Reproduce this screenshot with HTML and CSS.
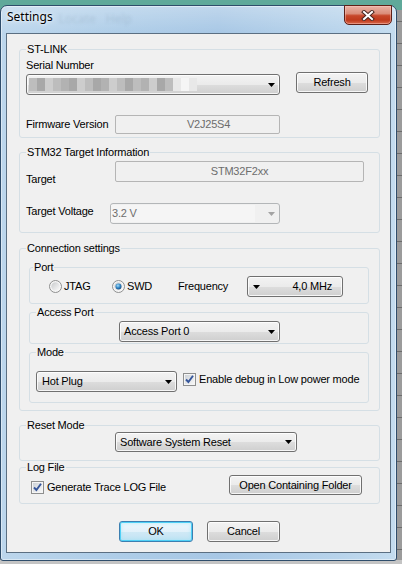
FILE: index.html
```html
<!DOCTYPE html>
<html lang="en">
<head>
<meta charset="utf-8">
<title>Settings</title>
<link rel="stylesheet" href="styles.css">
</head>
<body>
<div class="screen">
  <div class="window">
    <div class="titlebar">
      <span class="title">Settings</span>
      <span class="ghost ghost-1">Locate</span>
      <span class="ghost ghost-2">Help</span>
      <div class="close">
        <svg width="14" height="11" viewBox="0 0 14 11"><path d="M3 2L11 9M11 2L3 9" stroke="#4a2620" stroke-width="4" stroke-linecap="square" fill="none"/><path d="M3 2L11 9M11 2L3 9" stroke="#ffffff" stroke-width="2" stroke-linecap="square" fill="none"/></svg>
      </div>
    </div>
    <div class="client">
      <section class="group g-stlink">
        <span class="legend">ST-LINK</span>
        <div class="lbl">Serial Number</div>
        <div class="row serial-row">
          <div class="combo serial-combo">
            <div class="mosaic">
              <span class="m-b"></span><span class="m-a"></span><span class="m-c"></span><span class="m-b"></span><span class="m-d"></span><span class="m-a"></span><span class="m-c"></span><span class="m-b"></span><span class="m-a"></span><span class="m-d"></span><span class="m-c"></span><span class="m-b"></span><span class="m-a"></span><span class="m-b"></span><span class="m-d"></span><span class="m-c"></span><span class="m-a"></span><span class="m-b"></span><span class="m-e"></span><span class="m-f"></span><span class="m-e"></span>
            </div>
            <svg class="arr" width="7" height="4" viewBox="0 0 7 4"><path d="M0 0H7L3.5 4Z" fill="#000"/></svg>
          </div>
          <div class="btn refresh-btn">Refresh</div>
        </div>
        <div class="row fw-row">
          <span class="lbl fw-lbl">Firmware Version</span>
          <div class="rofield fw-field">V2J25S4</div>
        </div>
      </section>

      <section class="group g-target">
        <span class="legend">STM32 Target Information</span>
        <div class="row target-row">
          <span class="lbl side-lbl target-lbl">Target</span>
          <div class="rofield target-field">STM32F2xx</div>
        </div>
        <div class="row volt-row">
          <span class="lbl volt-lbl">Target Voltage</span>
          <div class="combo disabled volt-combo">
            <span class="dis-text">3.2 V</span>
            <svg class="arr" width="7" height="4" viewBox="0 0 7 4"><path d="M0 0H7L3.5 4Z" fill="#a3a3a3"/></svg>
          </div>
        </div>
      </section>

      <section class="group g-conn">
        <span class="legend">Connection settings</span>
        <div class="subgroup sg-port">
          <span class="legend">Port</span>
          <div class="row port-row">
            <label class="radio-item item-jtag">
              <svg width="13" height="13" viewBox="0 0 13 13"><defs><linearGradient id="rg1" x1="0" y1="0" x2="1" y2="1"><stop offset="0" stop-color="#c9cbcd"/><stop offset="1" stop-color="#fbfbfb"/></linearGradient></defs><circle cx="6.5" cy="6.5" r="6" fill="#f6f6f6" stroke="#8e8f8f"/><circle cx="6.5" cy="6.5" r="4.2" fill="url(#rg1)"/></svg>
              <span>JTAG</span>
            </label>
            <label class="radio-item item-swd">
              <svg width="13" height="13" viewBox="0 0 13 13"><defs><linearGradient id="rg2" x1="0" y1="0" x2="1" y2="1"><stop offset="0" stop-color="#c9cbcd"/><stop offset="1" stop-color="#fbfbfb"/></linearGradient><radialGradient id="rd2" cx="0.4" cy="0.35" r="0.7"><stop offset="0" stop-color="#a6def8"/><stop offset="0.55" stop-color="#2f83c4"/><stop offset="1" stop-color="#17497a"/></radialGradient></defs><circle cx="6.5" cy="6.5" r="6" fill="#f6f6f6" stroke="#8e8f8f"/><circle cx="6.5" cy="6.5" r="4.2" fill="url(#rg2)"/><circle cx="6.5" cy="6.5" r="3" fill="url(#rd2)"/></svg>
              <span>SWD</span>
            </label>
            <span class="freq-lbl">Frequency</span>
            <div class="btn freq-btn">
              <svg class="arr" width="7" height="4" viewBox="0 0 7 4"><path d="M0 0H7L3.5 4Z" fill="#000"/></svg>
              <span>4,0 MHz</span>
            </div>
          </div>
        </div>
        <div class="subgroup sg-access">
          <span class="legend">Access Port</span>
          <div class="combo access-combo">
            <span>Access Port 0</span>
            <svg class="arr" width="7" height="4" viewBox="0 0 7 4"><path d="M0 0H7L3.5 4Z" fill="#000"/></svg>
          </div>
        </div>
        <div class="subgroup sg-mode">
          <span class="legend">Mode</span>
          <div class="row mode-row">
            <div class="combo mode-combo">
              <span>Hot Plug</span>
              <svg class="arr" width="7" height="4" viewBox="0 0 7 4"><path d="M0 0H7L3.5 4Z" fill="#000"/></svg>
            </div>
            <label class="check-item lowpower">
              <svg width="13" height="13" viewBox="0 0 13 13"><defs><linearGradient id="cg1" x1="0" y1="0" x2="1" y2="1"><stop offset="0" stop-color="#cdd2d8"/><stop offset="1" stop-color="#f7f7f7"/></linearGradient></defs><rect x="0.5" y="0.5" width="12" height="12" fill="#f5f5f5" stroke="#8e8f8f"/><rect x="2" y="2" width="9" height="9" fill="url(#cg1)"/><path d="M3 6.5L5.4 9L10 2.8" fill="none" stroke="#36569b" stroke-width="1.9"/></svg>
              <span>Enable debug in Low power mode</span>
            </label>
          </div>
        </div>
      </section>

      <section class="group g-reset">
        <span class="legend">Reset Mode</span>
        <div class="combo reset-combo">
          <span>Software System Reset</span>
          <svg class="arr" width="7" height="4" viewBox="0 0 7 4"><path d="M0 0H7L3.5 4Z" fill="#000"/></svg>
        </div>
      </section>

      <section class="group g-log">
        <span class="legend">Log File</span>
        <div class="row log-row">
          <label class="check-item log-check">
            <svg width="13" height="13" viewBox="0 0 13 13"><defs><linearGradient id="cg2" x1="0" y1="0" x2="1" y2="1"><stop offset="0" stop-color="#cdd2d8"/><stop offset="1" stop-color="#f7f7f7"/></linearGradient></defs><rect x="0.5" y="0.5" width="12" height="12" fill="#f5f5f5" stroke="#8e8f8f"/><rect x="2" y="2" width="9" height="9" fill="url(#cg2)"/><path d="M3 6.5L5.4 9L10 2.8" fill="none" stroke="#36569b" stroke-width="1.9"/></svg>
            <span>Generate Trace LOG File</span>
          </label>
          <div class="btn folder-btn">Open Containing Folder</div>
        </div>
      </section>

      <div class="dlg-buttons">
        <div class="btn ok-btn">OK</div>
        <div class="btn cancel-btn">Cancel</div>
      </div>
    </div>
  </div>
</div>
</body>
</html>
```

FILE: styles.css
```css
* { box-sizing: border-box; }
html, body { margin: 0; padding: 0; }
body {
  width: 402px;
  height: 564px;
  overflow: hidden;
  font-family: "Liberation Sans", Arial, sans-serif;
  font-size: 11px;
  line-height: 13px;
  letter-spacing: -0.2px;
  color: #000;
}
.screen {
  width: 402px;
  height: 564px;
  padding-top: 5px;
  overflow: hidden;
  background:
    linear-gradient(to bottom, #5fa99a 0, #5fa99a 10px, transparent 10px),
    linear-gradient(to top, #c4c4c4 0, #c4c4c4 4px, transparent 4px),
    repeating-linear-gradient(to bottom, #9b9b9b 0, #9b9b9b 21px, #6c6c6c 21px, #6c6c6c 22px);
}
.window {
  width: 397px;
  height: 556px;
  border: 1px solid #2f4d6b;
  border-radius: 7px 7px 3px 3px;
  background:
    linear-gradient(to bottom, rgba(255,255,255,.28), rgba(255,255,255,0) 28px),
    linear-gradient(to right, #bcd6ec 0%, #aecde8 30%, #a7c7e5 55%, #b7d3eb 85%, #c4dcef 100%);
  box-shadow: inset 0 0 0 1px rgba(255,255,255,.45);
  display: flex;
  flex-direction: column;
}
.titlebar {
  height: 27px;
  flex: none;
  display: flex;
  align-items: flex-start;
}
.title {
  font-family: "Noto Sans", "Open Sans", sans-serif;
  font-size: 12px;
  line-height: 16px;
  letter-spacing: 0;
  margin: 3px 0 0 6px;
  text-shadow: 0 0 5px rgba(255,255,255,.95), 0 0 2px rgba(255,255,255,.8);
}
.ghost {
  font-family: "Noto Sans", sans-serif;
  font-size: 12px;
  line-height: 16px;
  letter-spacing: 0;
  color: rgba(50,70,100,.12);
  filter: blur(1.4px);
  margin-top: 5px;
}
.ghost-1 { margin-left: 6px; }
.ghost-2 { margin-left: 10px; }
.close {
  margin: -1px 4px 0 auto;
  width: 48px;
  height: 20px;
  border: 1px solid #5e2017;
  border-radius: 0 0 5px 5px;
  background: linear-gradient(to bottom, #e9b2a5 0%, #db8d79 42%, #c7472a 54%, #bf3a1c 78%, #d9694b 100%);
  box-shadow: inset 0 0 0 1px rgba(255,205,195,.45);
  display: flex;
  align-items: center;
  justify-content: center;
}
.client {
  margin: 0 5px;
  height: 520px;
  flex: none;
  background: #f0f0f0;
  border: 1px solid #5b6f82;
}
.group {
  position: relative;
  margin-left: 12px;
  width: 361px;
  border: 1px solid #d5dfe5;
  border-radius: 3px;
}
.subgroup {
  position: relative;
  width: 340px;
  border: 1px solid #d5dfe5;
  border-radius: 3px;
}
.legend {
  position: absolute;
  top: -7px;
  left: 6px;
  padding: 0 1px;
  background: #f0f0f0;
  white-space: nowrap;
}
.sg-port .legend { left: 3px; }
.row { display: flex; }
.lbl { white-space: nowrap; }

.btn, .combo {
  border: 1px solid #707070;
  border-radius: 3px;
  background: linear-gradient(to bottom, #f3f3f3 0%, #ebebeb 50%, #dddddd 51%, #cfcfcf 100%);
  box-shadow: inset 0 0 0 1px rgba(255,255,255,.8);
  display: flex;
  align-items: center;
  white-space: nowrap;
}
.btn { justify-content: center; }
.combo { justify-content: space-between; padding: 0 4px 0 4px; }
.arr { flex: none; display: block; }

.rofield {
  border: 1px solid #b5b5b5;
  border-radius: 2px;
  background: #f0f0f0;
  color: #6d6d6d;
  display: flex;
  align-items: center;
  justify-content: center;
}

/* ST-LINK */
.g-stlink { margin-top: 15px; height: 89px; padding: 9px 0 0 6px; }
.serial-row { align-items: flex-start; }
.serial-combo { margin-top: 2px; width: 254px; height: 21px; padding-left: 2px; }
.mosaic { display: flex; height: 13px; }
.mosaic span { width: 8px; height: 13px; }
.m-a { background: #a8a8a8; }
.m-b { background: #bdbdbd; }
.m-c { background: #cdcdcd; }
.m-d { background: #b2b2b2; }
.m-e { background: #e8e8e8; }
.m-f { background: #f5f5f5; }
.refresh-btn { margin-left: 16px; width: 72px; height: 21px; }
.fw-row { margin-top: 20px; align-items: center; }
.fw-lbl { width: 89px; }
.fw-field { width: 165px; height: 19px; padding-left: 22px; }

/* Target */
.g-target { margin-top: 14px; height: 81px; padding: 8px 0 0 6px; }
.target-row { align-items: flex-start; }
.side-lbl { width: 89px; }
.target-lbl { margin-top: 12px; }
.target-field { width: 249px; height: 21px; }
.volt-row { margin-top: 17px; align-items: flex-start; }
.volt-lbl { width: 84px; margin-top: 2px; }
.volt-combo { width: 170px; height: 21px; }
.combo.disabled {
  border-color: #b3b6b8;
  background: #f0f0f0;
  box-shadow: none;
  padding: 0 4px 0 0;
  align-items: stretch;
}
.dis-text {
  flex: 1;
  margin: 1px 13px 1px 0;
  background: #f5f5f5;
  color: #6d6d6d;
  padding-left: 1px;
  display: flex;
  align-items: center;
}
.combo.disabled .arr { align-self: center; }

/* Connection */
.g-conn { margin-top: 15px; height: 163px; padding: 0 0 0 9px; }
.sg-port { margin-top: 18px; height: 37px; padding: 8px 0 0 19px; }
.port-row { align-items: center; height: 21px; }
.radio-item { display: flex; align-items: center; }
.radio-item svg { flex: none; display: block; }
.radio-item span { margin-left: 2px; }
.item-jtag { width: 63px; }
.item-swd { width: 66px; }
.freq-lbl { width: 69px; }
.freq-btn { width: 96px; height: 21px; justify-content: space-between; padding: 0 10px 0 5px; }
.sg-access { margin-top: 8px; height: 32px; padding: 8px 0 0 89px; }
.access-combo { width: 161px; height: 21px; }
.sg-mode { margin-top: 8px; height: 51px; padding: 18px 0 0 6px; }
.mode-row { align-items: flex-start; }
.mode-combo { width: 141px; height: 21px; padding-left: 5px; }
.check-item { display: flex; align-items: flex-start; white-space: nowrap; }
.check-item svg { flex: none; display: block; }
.check-item span { margin-left: 3px; }
.lowpower { margin-left: 6px; margin-top: 2px; }

/* Reset */
.g-reset { margin-top: 14px; height: 36px; padding: 6px 0 0 95px; }
.reset-combo { width: 182px; height: 20px; }

/* Log */
.g-log { margin-top: 6px; height: 37px; padding: 7px 0 0 11px; }
.log-row { align-items: flex-start; }
.log-check { width: 198px; margin-top: 6px; }
.folder-btn { width: 133px; height: 20px; }

/* Dialog buttons */
.dlg-buttons { display: flex; margin-top: 17px; padding-left: 112px; gap: 14px; }
.ok-btn {
  width: 74px;
  height: 21px;
  border-color: #3c7fb1;
  background: linear-gradient(to bottom, #eef7fc 0%, #e2f1fa 50%, #d0e9f6 51%, #c2e2f3 100%);
  box-shadow: inset 0 0 0 1px #4fd0f6, inset 0 0 3px 2px rgba(140,225,250,.35);
}
.cancel-btn { width: 73px; height: 21px; }
```
